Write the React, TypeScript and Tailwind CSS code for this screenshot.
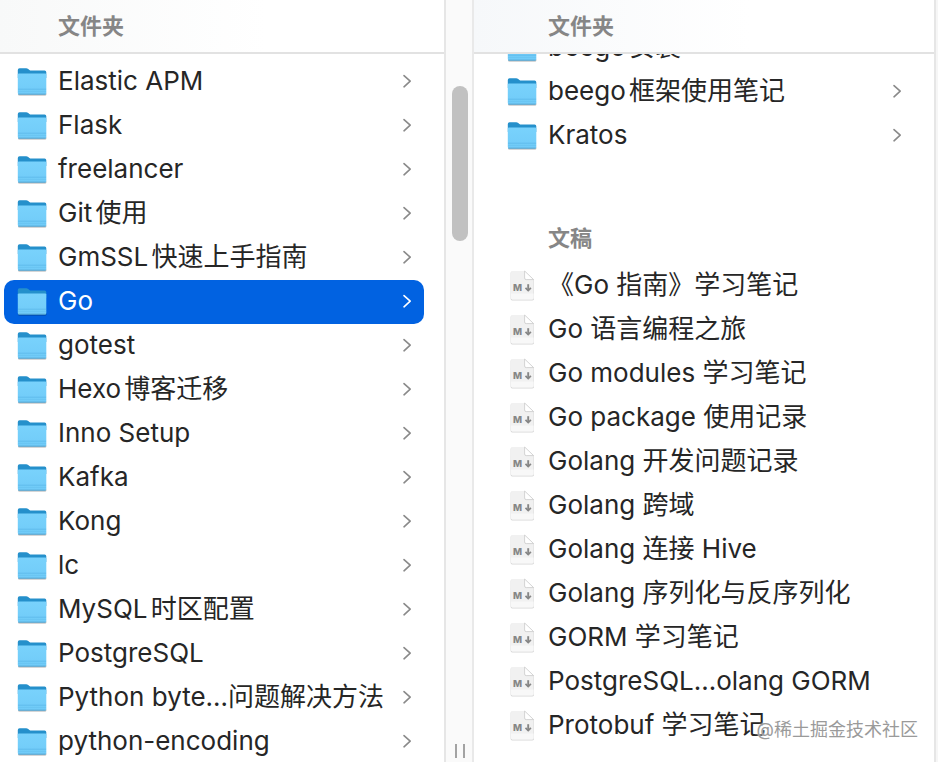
import { useState } from "react"
import clsx from "clsx"

const folders = [
  "Elastic APM",
  "Flask",
  "freelancer",
  "Git使用",
  "GmSSL快速上手指南",
  "Go",
  "gotest",
  "Hexo博客迁移",
  "Inno Setup",
  "Kafka",
  "Kong",
  "lc",
  "MySQL时区配置",
  "PostgreSQL",
  "Python byte…问题解决方法",
  "python-encoding",
]

const subFolders = ["beego安装", "beego框架使用笔记", "Kratos"]

const documents = [
  "《Go 指南》学习笔记",
  "Go 语言编程之旅",
  "Go modules 学习笔记",
  "Go package 使用记录",
  "Golang 开发问题记录",
  "Golang 跨域",
  "Golang 连接 Hive",
  "Golang 序列化与反序列化",
  "GORM 学习笔记",
  "PostgreSQL…olang GORM",
  "Protobuf 学习笔记",
]

function FolderIcon() {
  return (
    <svg viewBox="0 0 32 32" className="size-8 shrink-0" aria-hidden="true">
      <defs>
        <linearGradient id="folderFront" x1="0" y1="0" x2="0" y2="1">
          <stop offset="0" stopColor="#79d2fc" />
          <stop offset="1" stopColor="#70cbf8" />
        </linearGradient>
      </defs>
      <rect x="2" y="26" width="28.4" height="3.8" rx="1.5" fill="#000" opacity="0.22" />
      <path
        d="M1.8 4Q1.8 2.2 3.6 2.2H10.2Q11.3 2.2 12.2 3L13.4 4Q14.2 4.6 15.2 4.6H28.6Q30.3 4.6 30.3 6.3V12H1.8Z"
        fill="#2590cb"
      />
      <path d="M1.8 8.6Q1.8 7.4 3 7.4H29.1Q30.3 7.4 30.3 8.6V27Q30.3 28.6 28.7 28.6H3.4Q1.8 28.6 1.8 27Z" fill="url(#folderFront)" />
      <path d="M2 23.2H30.1" stroke="#58b6e6" strokeWidth="0.7" />
      <path d="M2 25.4H30.1" stroke="#62bdea" strokeWidth="0.5" />
      <path d="M2.4 28.2H29.7" stroke="#4f9fc9" strokeWidth="0.9" />
    </svg>
  )
}

function MarkdownIcon() {
  return (
    <svg viewBox="0 0 32 32" className="size-8 shrink-0" aria-hidden="true">
      <path d="M4.6 3Q4.6 1.4 6.2 1.4H19L28 10V28.8Q28 30.4 26.4 30.4H6.2Q4.6 30.4 4.6 28.8Z" fill="#000" opacity="0.16" />
      <path d="M5 2.4Q5 1 6.4 1H18.6L27.6 9.6V28Q27.6 29.4 26.2 29.4H6.4Q5 29.4 5 28Z" fill="#f1f1f1" />
      <path d="M5 23.4H27.6V28Q27.6 29.4 26.2 29.4H6.4Q5 29.4 5 28Z" fill="#f8f8f8" />
      <path d="M18.6 1V8Q18.6 9.6 20.2 9.6H27.6Z" fill="#fff" stroke="#cacaca" strokeWidth="0.8" />
      <text x="7" y="21.3" fontSize="9.6" fontWeight="800" fill="#868686">
        M
      </text>
      <path d="M22.2 14.2V20.4" stroke="#868686" strokeWidth="1.9" />
      <path d="M19.5 17.8L22.2 20.6L24.9 17.8" fill="none" stroke="#868686" strokeWidth="1.7" />
    </svg>
  )
}

function Chevron({ active = false }: { active?: boolean }) {
  return (
    <svg
      viewBox="0 0 12 16"
      className={clsx("ml-auto h-4 w-3 shrink-0", active ? "text-white" : "text-[#8a8a8a]")}
      fill="none"
      stroke="currentColor"
      strokeWidth="1.6"
      strokeLinecap="round"
      strokeLinejoin="round"
      aria-hidden="true"
    >
      <path d="M4 1.6L10.2 7.2L4 12.8" />
    </svg>
  )
}

type RowProps = {
  label: string
  kind: "folder" | "document"
  active?: boolean
  onClick?: () => void
}

function Row({ label, kind, active = false, onClick }: RowProps) {
  return (
    <li>
      <button
        type="button"
        onClick={onClick}
        className={clsx(
          "flex h-11 w-full items-center gap-[10px] rounded-[10px] px-3 text-left text-[26px] leading-8",
          active ? "bg-[#0162e1] text-white" : "text-[#262626]"
        )}
      >
        {kind === "folder" ? <FolderIcon /> : <MarkdownIcon />}
        <span className="pb-[2px] whitespace-nowrap [text-autospace:normal]">{label}</span>
        {kind === "folder" && <Chevron active={active} />}
      </button>
    </li>
  )
}

function App() {
  const [selected, setSelected] = useState("Go")

  return (
    <main className="relative grid h-screen grid-cols-[446fr_28px_462fr_2px] overflow-hidden bg-white font-['Inter','Noto_Sans_CJK_SC',sans-serif]">
      <section className="flex min-w-0 flex-col overflow-hidden border-r-2 border-[#e6e6e6]">
        <h2 className="h-[54px] shrink-0 border-b-2 border-[#e2e2e2] bg-linear-to-r from-[#f8f9f9] to-white to-60% pl-[58px] text-[22px] leading-[52px] font-semibold text-[#868686]">
          文件夹
        </h2>
        <ul className="mr-5 ml-1 pt-[6px]">
          {folders.map((name) => (
            <Row
              key={name}
              label={name}
              kind="folder"
              active={name === selected}
              onClick={() => setSelected(name)}
            />
          ))}
        </ul>
      </section>

      {/* scroll track with the column resize grip */}
      <div className="flex flex-col items-center justify-between border-r-2 border-[#e9e9e9] bg-[#fafafa] pt-[86px] pb-1 pl-[2px]">
        <div className="h-[155px] w-4 rounded-full bg-[#c1c1c1]" />
        <div className="flex h-[14px] w-[10px] justify-between">
          <span className="w-[2px] bg-[#a3a3a3]" />
          <span className="w-[2px] bg-[#a3a3a3]" />
        </div>
      </div>

      <section className="flex min-w-0 flex-col overflow-hidden border-r-2 border-[#e6e6e6]">
        <h2 className="h-[54px] shrink-0 border-b-2 border-[#e2e2e2] bg-linear-to-r from-[#f6f8fa] to-white to-60% pl-[74px] text-[22px] leading-[52px] font-semibold text-[#868686]">
          文件夹
        </h2>
        {/* list is scrolled, so its first row is cut off by the header */}
        <div className="min-h-0 flex-1 overflow-hidden px-5">
          <ul className="-mt-7">
            {subFolders.map((name) => (
              <Row key={name} label={name} kind="folder" />
            ))}
          </ul>
          <h2 className="pt-16 pb-[10px] pl-[54px] text-[22px] leading-8 font-semibold text-[#868686]">文稿</h2>
          <ul>
            {documents.map((name) => (
              <Row key={name} label={name} kind="document" />
            ))}
          </ul>
        </div>
      </section>

      <div className="bg-[#f6f6f6]" />

      <p className="absolute right-5 bottom-5 text-[18px] leading-6 text-[#9a9a9a] text-shadow-[0_0_2px_#ffffff]">
        @稀土掘金技术社区
      </p>
    </main>
  )
}

export default App
